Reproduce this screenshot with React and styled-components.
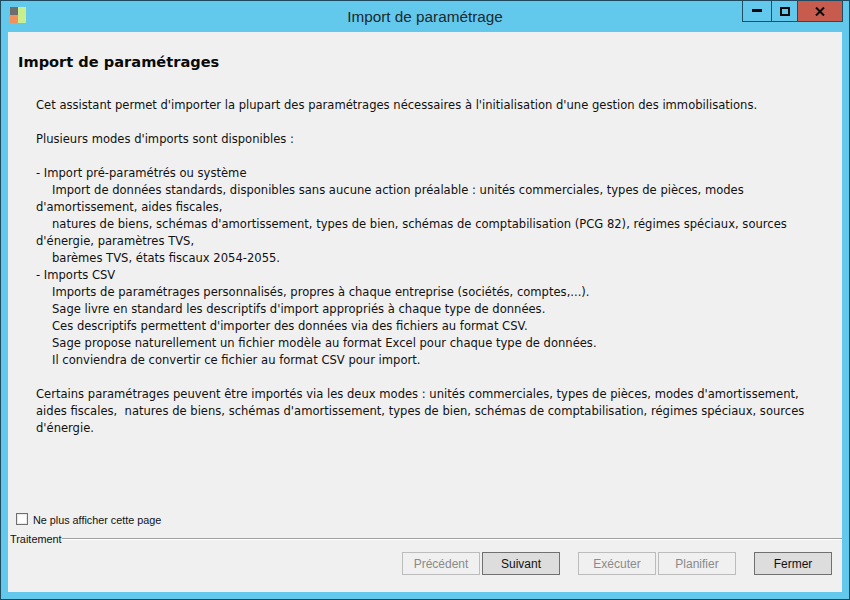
import styled, { createGlobalStyle } from "styled-components";

const GlobalStyle = createGlobalStyle`
  html, body {
    margin: 0;
    padding: 0;
    width: 850px;
    height: 600px;
    overflow: hidden;
  }
  * {
    box-sizing: border-box;
  }
`;

const Window = styled.div`
  width: 850px;
  height: 600px;
  display: flex;
  flex-direction: column;
  background-color: #63c9ec;
  border: 1px solid #1d4a5f;
  padding: 0 7px 7px 7px;
  font-family: "DejaVu Sans", Tahoma, sans-serif;
  color: #111;
`;

const TitleBar = styled.div`
  height: 30px;
  flex: none;
  display: grid;
  grid-template-columns: 1fr auto 1fr;
  align-items: start;
`;

const AppIcon = styled.svg`
  width: 17px;
  height: 17px;
  margin: 6px 0 0 2px;
  display: block;
`;

const Title = styled.div`
  font-size: 15.3px;
  line-height: 16px;
  padding-top: 8px;
  font-family: "Liberation Sans", Arial, sans-serif;
  color: #1a2a30;
`;

const Controls = styled.div`
  justify-self: end;
  display: flex;
  height: 21px;
  margin-right: -1px;
  border: 1px solid #1f4d63;
  border-top: none;
`;

const ControlButton = styled.div`
  width: ${(p) => p.$w}px;
  display: flex;
  align-items: center;
  justify-content: center;
  background-color: ${(p) => (p.$close ? "#c75b4e" : "transparent")};
  border-left: ${(p) => (p.$first ? "none" : "1px solid #1f4d63")};
`;

const Panel = styled.div`
  flex: 1;
  min-height: 0;
  display: flex;
  flex-direction: column;
  background-color: #f0f0f0;
  border-top: 1px solid #8fb8c8;
`;

const Main = styled.div`
  flex: 1;
  padding: 20px 0 0 10px;
`;

const Heading = styled.h1`
  margin: 0;
  font-size: 14.6px;
  line-height: 20px;
  font-weight: bold;
  color: #0a0a0a;
`;

const Body = styled.div`
  margin: 25px 28px 0 18px;
  font-size: 11.57px;
  line-height: 17px;
`;

const Line = styled.div`
  min-height: 17px;
  white-space: pre;
  padding-left: ${(p) => (p.$indent ? "16px" : "0")};
`;

const CheckRow = styled.label`
  display: flex;
  align-items: center;
  gap: 5px;
  padding-left: 8px;
  height: 14px;
  font-family: "Liberation Sans", Arial, sans-serif;
  font-size: 10.8px;
`;

const CheckBox = styled.span`
  width: 12px;
  height: 12px;
  margin-bottom: 3px;
  border: 1px solid #707070;
  box-shadow: inset 0 0 0 1px #e8e8e8;
  background-color: #fff;
`;

const Section = styled.div`
  display: flex;
  align-items: center;
  margin-top: 5px;
  padding-left: 2px;
  height: 14px;
  font-family: "Liberation Sans", Arial, sans-serif;
  font-size: 10.9px;
`;

const Rule = styled.div`
  flex: 1;
  height: 2px;
  border-top: 1px solid #a0a0a0;
  border-bottom: 1px solid #fff;
`;

const Buttons = styled.div`
  display: flex;
  justify-content: flex-end;
  padding: 6px 10px 17px 0;
`;

const Button = styled.div`
  width: 78px;
  height: 23px;
  margin-left: ${(p) => p.$gap}px;
  display: flex;
  align-items: center;
  justify-content: center;
  font-family: "Liberation Sans", Arial, sans-serif;
  font-size: 12px;
  border: 1px solid ${(p) => (p.$disabled ? "#bcbcbc" : "#707070")};
  background-color: ${(p) => (p.$disabled ? "#f0f0f0" : "#dddddd")};
  color: ${(p) => (p.$disabled ? "#8a8a8a" : "#111")};
`;

const lines = [
  { t: "Cet assistant permet d'importer la plupart des paramétrages nécessaires à l'initialisation d'une gestion des immobilisations." },
  { t: "" },
  { t: "Plusieurs modes d'imports sont disponibles :" },
  { t: "" },
  { t: "- Import pré-paramétrés ou système" },
  { t: "Import de données standards, disponibles sans aucune action préalable : unités commerciales, types de pièces, modes", indent: true },
  { t: "d'amortissement, aides fiscales," },
  { t: "natures de biens, schémas d'amortissement, types de bien, schémas de comptabilisation (PCG 82), régimes spéciaux, sources", indent: true },
  { t: "d'énergie, paramètres TVS," },
  { t: "barèmes TVS, états fiscaux 2054-2055.", indent: true },
  { t: "- Imports CSV" },
  { t: "Imports de paramétrages personnalisés, propres à chaque entreprise (sociétés, comptes,...).", indent: true },
  { t: "Sage livre en standard les descriptifs d'import appropriés à chaque type de données.", indent: true },
  { t: "Ces descriptifs permettent d'importer des données via des fichiers au format CSV.", indent: true },
  { t: "Sage propose naturellement un fichier modèle au format Excel pour chaque type de données.", indent: true },
  { t: "Il conviendra de convertir ce fichier au format CSV pour import.", indent: true },
  { t: "" },
  { t: "Certains paramétrages peuvent être importés via les deux modes : unités commerciales, types de pièces, modes d'amortissement," },
  { t: "aides fiscales,  natures de biens, schémas d'amortissement, types de bien, schémas de comptabilisation, régimes spéciaux, sources" },
  { t: "d'énergie." },
];

const buttons = [
  { label: "Précédent", gap: 0, disabled: true },
  { label: "Suivant", gap: 2 },
  { label: "Exécuter", gap: 18, disabled: true },
  { label: "Planifier", gap: 2, disabled: true },
  { label: "Fermer", gap: 18 },
];

export default function App() {
  return (
    <>
      <GlobalStyle />
      <Window>
        <TitleBar>
          <AppIcon viewBox="0 0 17 17">
            <rect x="0" y="0" width="8" height="8" fill="#6e6e6e" />
            <rect x="0" y="8" width="8" height="8" fill="#f2915c" />
            <rect x="8" y="0" width="8" height="16" fill="#c8ee8e" />
          </AppIcon>
          <Title>Import de paramétrage</Title>
          <Controls>
            <ControlButton $w={28} $first>
              <svg width="10" height="4" viewBox="0 0 10 4">
                <rect x="0" y="0" width="10" height="3" fill="#0a0a0a" />
              </svg>
            </ControlButton>
            <ControlButton $w={26}>
              <svg width="10" height="9" viewBox="0 0 10 9">
                <path d="M1 1h8v7H1z" fill="none" stroke="#0a0a0a" strokeWidth="2" />
              </svg>
            </ControlButton>
            <ControlButton $w={45} $close>
              <svg width="10" height="9" viewBox="0 0 10 9">
                <path d="M1 0.5l8 8M9 0.5l-8 8" stroke="#0a0a0a" strokeWidth="2" fill="none" />
              </svg>
            </ControlButton>
          </Controls>
        </TitleBar>
        <Panel>
          <Main>
            <Heading>Import de paramétrages</Heading>
            <Body>
              {lines.map((l, i) => (
                <Line key={i} $indent={l.indent}>{l.t}</Line>
              ))}
            </Body>
          </Main>
          <CheckRow>
            <CheckBox />
            Ne plus afficher cette page
          </CheckRow>
          <Section>
            Traitement
            <Rule />
          </Section>
          <Buttons>
            {buttons.map((b) => (
              <Button key={b.label} $gap={b.gap} $disabled={b.disabled}>{b.label}</Button>
            ))}
          </Buttons>
        </Panel>
      </Window>
    </>
  );
}
